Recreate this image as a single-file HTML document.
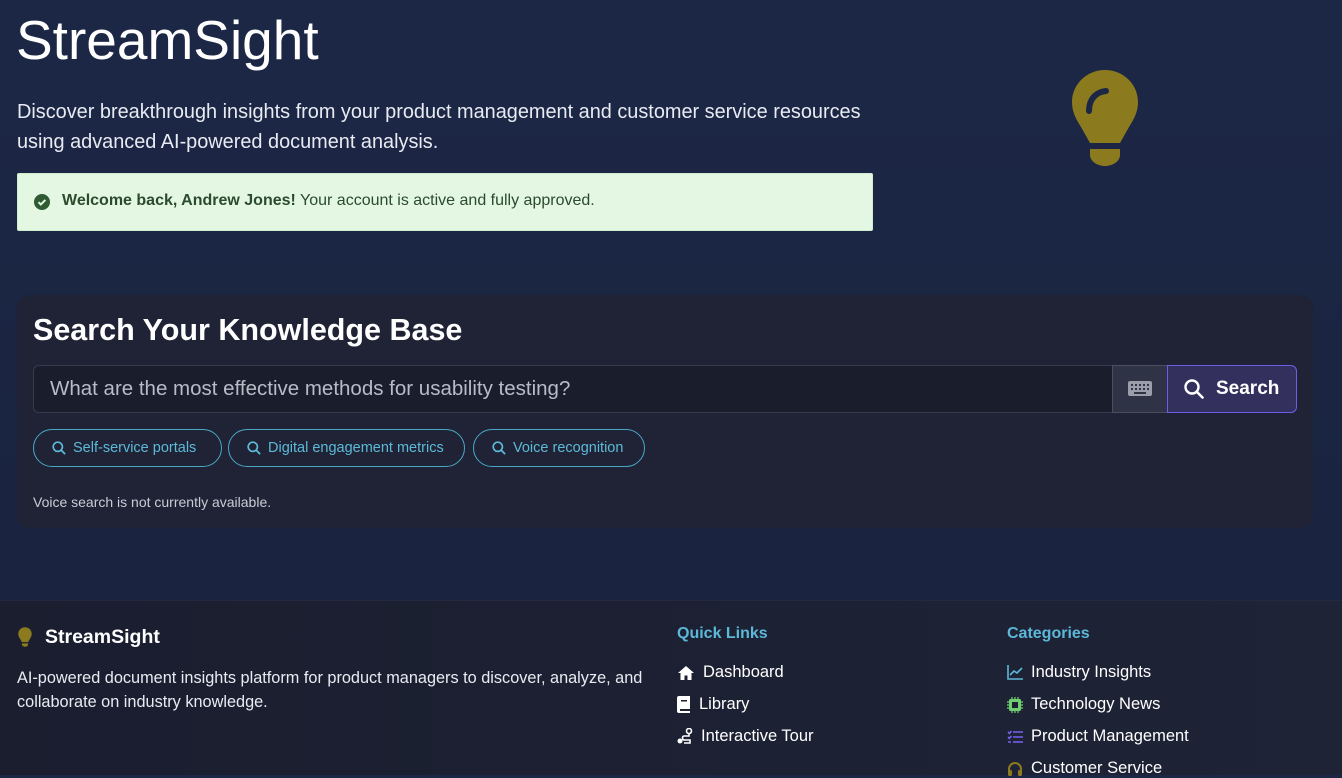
<!DOCTYPE html>
<html><head><meta charset="utf-8"><style>
*{margin:0;padding:0;box-sizing:border-box}
body{width:1342px;height:775px;overflow:hidden;font-family:"Liberation Sans",sans-serif;background:linear-gradient(180deg,#1c2746 0%,#1a2440 75%);position:relative;color:#fff}
.a{position:absolute;white-space:nowrap}
.chip{position:absolute;top:429px;height:38px;border:1.5px solid #4aa8c6;border-radius:19px;color:#5cbad8;font-size:14.5px;display:flex;align-items:center;padding-left:18px}
.chip svg{margin-right:7px}
.fl{position:absolute;font-size:16.5px;color:#fff;display:flex;align-items:center}
</style></head><body>
<div class="a" style="left:16px;top:8px;font-size:55px;font-weight:300;letter-spacing:0px">StreamSight</div>
<div class="a" style="left:17px;top:97px;font-size:19.9px;line-height:30px;color:#e8ebf2">Discover breakthrough insights from your product management and customer service resources<br>using advanced AI-powered document analysis.</div>
<svg class="a" style="left:1071px;top:69px" width="68" height="98" viewBox="0 0 68 98"><path d="M34 1C16 1 1 15 1 33c0 10 4 17 9 25l9 16h30l9-16c5-8 9-15 9-25C67 15 52 1 34 1z" fill="#8c7a1e"/><path d="M18 42c0-12 7-19 17-20" stroke="#1c2746" stroke-width="6" fill="none" stroke-linecap="round"/><path d="M19 80h30v6c0 6-7 11-15 11s-15-5-15-11z" fill="#8c7a1e"/></svg>
<div class="a" style="left:17px;top:173px;width:856px;height:58px;background:#e3f7e3;border-radius:2px;border:1px solid #cfeecf"></div>
<svg class="a" style="left:34px;top:194px" width="16" height="16" viewBox="0 0 16 16"><circle cx="8" cy="8" r="8" fill="#2f5a32"/><path d="M4.5 8.2l2.3 2.3 4.6-4.6" stroke="#e3f7e3" stroke-width="2" fill="none"/></svg>
<div class="a" style="left:62px;top:192px;font-size:16px;color:#2c4a2e"><b>Welcome back, Andrew Jones!</b> Your account is active and fully approved.</div>
<div class="a" style="left:17px;top:295px;width:1296px;height:233px;background:#1f2335;border-radius:12px"></div>
<div class="a" style="left:33px;top:313px;font-size:30.5px;font-weight:bold">Search Your Knowledge Base</div>
<div class="a" style="left:33px;top:365px;width:1080px;height:48px;background:#1a1d2b;border:1px solid #363a4c;border-radius:6px 0 0 6px"></div>
<div class="a" style="left:50px;top:377px;font-size:20.5px;color:#b8bcc8">What are the most effective methods for usability testing?</div>
<div class="a" style="left:1112px;top:365px;width:56px;height:48px;background:#2e3345;border:1px solid #4a4f60"></div>
<svg class="a" style="left:1128px;top:381px" width="24" height="16" viewBox="0 0 24 16"><rect width="24" height="15" rx="2" fill="#9a9eab"/><g fill="#2e3345"><rect x="3" y="3" width="2" height="2"/><rect x="7" y="3" width="2" height="2"/><rect x="11" y="3" width="2" height="2"/><rect x="15" y="3" width="2" height="2"/><rect x="19" y="3" width="2" height="2"/><rect x="3" y="7" width="2" height="2"/><rect x="7" y="7" width="2" height="2"/><rect x="11" y="7" width="2" height="2"/><rect x="15" y="7" width="2" height="2"/><rect x="19" y="7" width="2" height="2"/><rect x="6" y="11" width="12" height="2"/></g></svg>
<div class="a" style="left:1167px;top:365px;width:130px;height:48px;background:#33305e;border:1px solid #6f5ce8;border-radius:0 6px 6px 0"></div>
<svg class="a" style="left:1184px;top:379px" width="20" height="20" viewBox="0 0 20 20"><circle cx="8" cy="8" r="6.5" stroke="#fff" stroke-width="2.4" fill="none"/><path d="M13 13l5.5 5.5" stroke="#fff" stroke-width="2.6" stroke-linecap="round"/></svg>
<div class="a" style="left:1216px;top:378px;font-size:19px;font-weight:bold">Search</div>
<div class="chip" style="left:33px;width:189px"><svg width="14" height="14" viewBox="0 0 14 14"><circle cx="5.8" cy="5.8" r="4.6" stroke="#5cbad8" stroke-width="1.7" fill="none"/><path d="M9.3 9.3l3.8 3.8" stroke="#5cbad8" stroke-width="1.8"/></svg>Self-service portals</div>
<div class="chip" style="left:228px;width:237px"><svg width="14" height="14" viewBox="0 0 14 14"><circle cx="5.8" cy="5.8" r="4.6" stroke="#5cbad8" stroke-width="1.7" fill="none"/><path d="M9.3 9.3l3.8 3.8" stroke="#5cbad8" stroke-width="1.8"/></svg>Digital engagement metrics</div>
<div class="chip" style="left:473px;width:172px"><svg width="14" height="14" viewBox="0 0 14 14"><circle cx="5.8" cy="5.8" r="4.6" stroke="#5cbad8" stroke-width="1.7" fill="none"/><path d="M9.3 9.3l3.8 3.8" stroke="#5cbad8" stroke-width="1.8"/></svg>Voice recognition</div>
<div class="a" style="left:33px;top:494px;font-size:14px;color:#c9ccd6">Voice search is not currently available.</div>
<div class="a" style="left:0;top:600px;width:1342px;height:175px;background:linear-gradient(90deg,#1a1e2f,#1e2336);border-top:1px solid #232a3f"></div>
<svg class="a" style="left:17px;top:627px" width="16" height="20" viewBox="0 0 68 98"><path d="M34 1C16 1 1 15 1 33c0 10 4 17 9 25l9 16h30l9-16c5-8 9-15 9-25C67 15 52 1 34 1z" fill="#8c7a1e"/><path d="M19 80h30v6c0 6-7 11-15 11s-15-5-15-11z" fill="#8c7a1e"/></svg>
<div class="a" style="left:45px;top:626px;font-size:19.5px;font-weight:bold">StreamSight</div>
<div class="a" style="left:17px;top:666px;font-size:16.3px;line-height:24px;color:#e8ebf2">AI-powered document insights platform for product managers to discover, analyze, and<br>collaborate on industry knowledge.</div>
<div class="a" style="left:677px;top:625px;font-size:16px;color:#5cb8d8;font-weight:bold">Quick Links</div>
<div class="a" style="left:1007px;top:625px;font-size:16px;color:#5cb8d8;font-weight:bold">Categories</div>
<div class="fl" style="left:677px;top:663px"><svg width="18" height="16" viewBox="0 0 18 16" style="margin-right:8px"><path d="M9 1L1 8h2.5v7h4v-4.5h3V15h4V8H17z" fill="#fff"/></svg>Dashboard</div>
<div class="fl" style="left:677px;top:695px"><svg width="14" height="17" viewBox="0 0 14 17" style="margin-right:8px"><path d="M2 0h11v13H3v2h10v2H2a2 2 0 01-2-2V2a2 2 0 012-2z" fill="#fff"/><rect x="4" y="4" width="6" height="1.5" fill="#1c2032"/></svg>Library</div>
<div class="fl" style="left:677px;top:727px"><svg width="16" height="17" viewBox="0 0 16 17" style="margin-right:8px"><circle cx="3" cy="13" r="2.5" fill="#fff"/><circle cx="12" cy="3" r="2.5" stroke="#fff" stroke-width="1.6" fill="none"/><path d="M12 6v2H7c-2 0-2 4 0 4h6v3H7" stroke="#fff" stroke-width="1.6" fill="none"/></svg>Interactive Tour</div>
<div class="fl" style="left:1007px;top:663px"><svg width="16" height="15" viewBox="0 0 16 15" style="margin-right:8px"><path d="M1 0v14h15M3 10l4-4 3 2 5-5" stroke="#5cb8d8" stroke-width="1.6" fill="none"/></svg>Industry Insights</div>
<div class="fl" style="left:1007px;top:695px"><svg width="16" height="16" viewBox="0 0 16 16" style="margin-right:8px"><rect x="2" y="2" width="12" height="12" rx="1.5" fill="#6fcf6f"/><rect x="5" y="5" width="6" height="6" fill="#1c2032"/><path d="M5 0v2M8 0v2M11 0v2M5 14v2M8 14v2M11 14v2M0 5h2M0 8h2M0 11h2M14 5h2M14 8h2M14 11h2" stroke="#6fcf6f" stroke-width="1.2"/></svg>Technology News</div>
<div class="fl" style="left:1007px;top:727px"><svg width="16" height="14" viewBox="0 0 16 14" style="margin-right:8px"><path d="M1 2l1.3 1.3L4.5 1M1 7l1.3 1.3L4.5 6M6 2h10M6 7h10M6 12h10M1 12h3" stroke="#7a62f0" stroke-width="1.6" fill="none"/></svg>Product Management</div>
<div class="fl" style="left:1007px;top:759px"><svg width="16" height="16" viewBox="0 0 16 16" style="margin-right:8px"><path d="M2 10V8a6 6 0 0112 0v2" stroke="#8c7a1e" stroke-width="2" fill="none"/><rect x="1" y="9" width="4" height="6" rx="1.5" fill="#8c7a1e"/><rect x="11" y="9" width="4" height="6" rx="1.5" fill="#8c7a1e"/></svg>Customer Service</div>
</body></html>
